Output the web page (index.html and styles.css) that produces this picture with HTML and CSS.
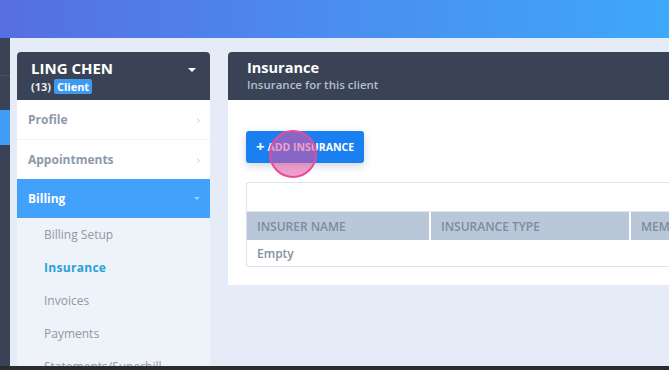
FILE: index.html
```html
<!DOCTYPE html>
<html lang="en">
<head>
    <meta charset="UTF-8">
    <meta name="viewport" content="width=device-width, initial-scale=1.0">
    <title>Client Insurance</title>
    <link rel="stylesheet" href="styles.css">
</head>
<body>
<div class="topbar"></div>
<div class="main">
    <div class="appnav">
        <div class="appnav-line"></div>
        <div class="appnav-active"></div>
    </div>
    <div class="content">
        <!-- client menu -->
        <aside class="client-panel">
            <div class="client-head">
                <div>
                    <div class="client-name">LING CHEN</div>
                    <div class="client-meta">(13) <span class="badge">Client</span></div>
                </div>
                <span class="caret"></span>
            </div>
            <ul class="menu">
                <li class="menu-item">Profile <span class="chev">&#8250;</span></li>
                <li class="menu-item">Appointments <span class="chev">&#8250;</span></li>
                <li class="menu-item active">Billing <span class="caret small"></span></li>
            </ul>
            <ul class="submenu">
                <li>Billing Setup</li>
                <li class="current">Insurance</li>
                <li>Invoices</li>
                <li>Payments</li>
                <li>Statements/Superbill</li>
            </ul>
        </aside>

        <section class="panel">
            <div class="panel-head">
                <h2>Insurance</h2>
                <p>Insurance for this client</p>
            </div>
            <div class="panel-body">
                <div class="btn-wrap">
                    <button class="add-btn"><span class="plus">+</span> ADD INSURANCE</button>
                    <span class="click-dot"></span>
                </div>
                <div class="table-box">
                    <div class="table-tools"></div>
                    <table>
                        <colgroup>
                            <col class="col-name">
                            <col class="col-type">
                            <col>
                        </colgroup>
                        <thead>
                            <tr>
                                <th>INSURER NAME</th>
                                <th>INSURANCE TYPE</th>
                                <th>MEMBER ID</th>
                            </tr>
                        </thead>
                        <tbody>
                            <tr><td colspan="3">Empty</td></tr>
                        </tbody>
                    </table>
                </div>
            </div>
        </section>
    </div>
</div>
<div class="bottombar"></div>
</body>
</html>
```

FILE: styles.css
```css
html, body { margin: 0; padding: 0; }
body { width: 669px; height: 370px; overflow: hidden; font-family: "Open Sans", "Liberation Sans", sans-serif; background: #e5ecf8; display: flex; flex-direction: column; }
ul { list-style: none; margin: 0; padding: 0; }

.topbar { height: 38px; flex: none; background: linear-gradient(90deg, #566ee2 0%, #4b8df0 50%, #3ea8f9 100%); }
.bottombar { height: 4px; flex: none; background: #2c2c2e; }

.main { flex: 1; display: flex; min-height: 0; }
.appnav { width: 10px; flex: none; background: #3a4255; }
.appnav-line { height: 1px; margin-top: 37px; background: #4a5367; }
.appnav-active { height: 35px; margin-top: 34px; background: #3f9df5; }

.content { flex: 1; display: flex; gap: 18px; padding: 14px 0 0 7px; min-width: 0; overflow: hidden; }

/* left client panel */
.client-panel { width: 193px; flex: none; background: #fff; border-radius: 4px 4px 0 0; overflow: hidden; }
.client-head { height: 48px; box-sizing: border-box; background: #3a4356; color: #fff; display: flex; justify-content: space-between; align-items: flex-start; padding: 6px 14px 0 14px; }
.client-name { font-size: 15px; font-weight: 700; line-height: 20px; }
.client-meta { font-size: 11px; font-weight: 700; line-height: 15px; margin-top: 1px; color: #e6ebf2; }
.badge { display: inline-block; background: #3d9af2; color: #fff; padding: 0 3px; border-radius: 2px; line-height: 15px; }
.caret { width: 0; height: 0; border-left: 4px solid transparent; border-right: 4px solid transparent; border-top: 4px solid #fff; margin-top: 10px; }
.caret.small { border-left-width: 3px; border-right-width: 3px; border-top: 3px solid #a9cdf6; margin: 0; }

.menu-item { height: 39px; display: flex; align-items: center; justify-content: space-between; padding: 0 10px 0 11px; font-size: 12px; font-weight: 700; color: #8d99aa; }
.menu-item + .menu-item { border-top: 1px solid #f1f4f8; }
.chev { color: #cfd6df; font-size: 12px; font-weight: 400; }
.menu-item.active { background: #42a1fa; color: #fff; border-top: none; }

.submenu { background: #eef3f9; }
.submenu li { height: 33px; line-height: 33px; padding-left: 27px; font-size: 12px; color: #8f98a5; }
.submenu li.current { color: #2aa0d9; font-weight: 700; letter-spacing: 0.3px; }

/* right panel */
.panel { width: 480px; flex: none; align-self: flex-start; background: #fff; border-radius: 4px 4px 0 0; overflow: hidden; }
.panel-head { height: 48px; box-sizing: border-box; background: #3a4356; padding: 6px 19px 0; }
.panel-head h2 { margin: 0; font-size: 14.5px; font-weight: 700; color: #fff; line-height: 19px; }
.panel-head p { margin: 0; font-size: 11.5px; font-weight: 600; color: #b3bfcd; line-height: 15px; }
.panel-body { padding: 31px 0 18px 18px; }

.btn-wrap { position: relative; width: 118px; }
.add-btn { width: 118px; height: 32px; border: none; border-radius: 3px; background: #1a80f2; color: #fff; font-family: inherit; font-size: 10.5px; font-weight: 700; padding: 0; box-shadow: 0 3px 8px rgba(30, 60, 110, 0.22); display: flex; align-items: center; justify-content: center; gap: 3px; }
.plus { font-size: 15px; font-weight: 700; line-height: 1; margin-top: -2px; }
.click-dot { position: absolute; left: 23px; top: -1px; width: 44px; height: 44px; border-radius: 50%; border: 2px solid #e94b9c; background: rgba(228, 80, 160, 0.55); }

.table-box { margin-top: 19px; border: 1px solid #dce3ec; border-right: none; border-radius: 3px 0 0 3px; }
.table-tools { height: 28px; border-bottom: 1px solid #dce3ec; }
table { border-collapse: collapse; width: 100%; table-layout: fixed; }
.col-name { width: 183px; }
.col-type { width: 200px; }
th { background: #b9c7d9; color: #7d8ca0; font-size: 12px; font-weight: 600; text-align: left; height: 28px; padding: 0 10px; white-space: nowrap; overflow: hidden; }
th + th { border-left: 2px solid #fff; }
td { height: 26px; padding: 0 10px; font-size: 12px; font-weight: 600; color: #8591a1; }
```
